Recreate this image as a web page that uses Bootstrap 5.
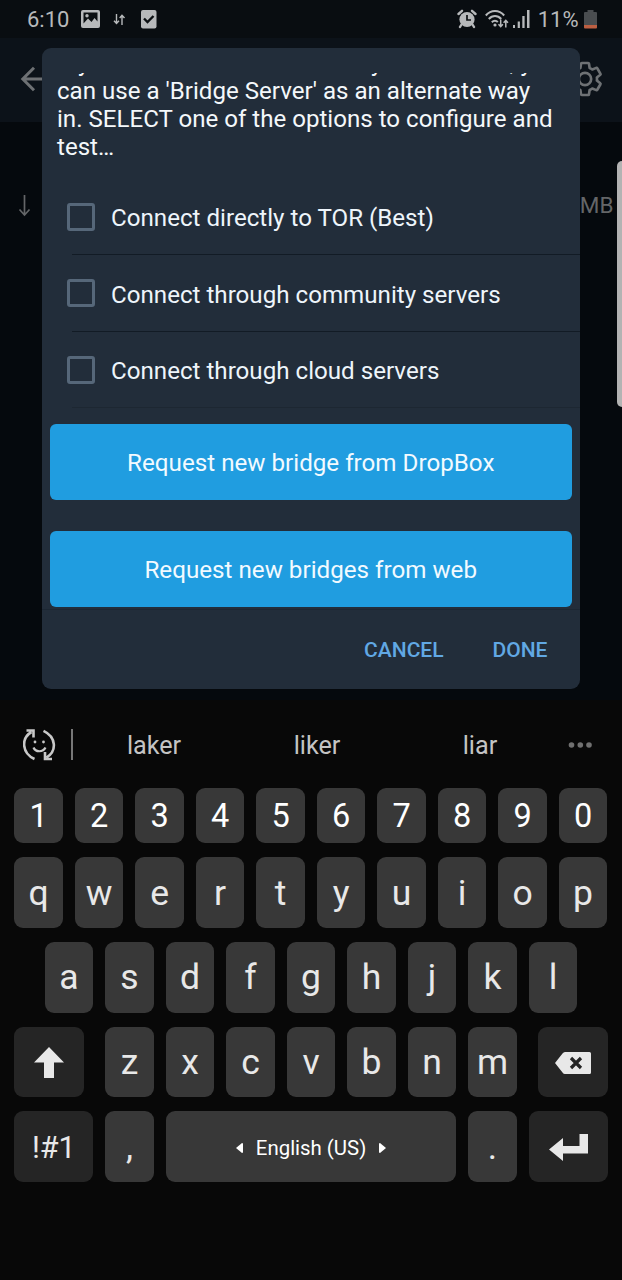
<!DOCTYPE html>
<html lang="en">
<head>
<meta charset="utf-8">
<meta name="viewport" content="width=device-width, initial-scale=1">
<title>Bridge settings</title>
<link href="https://cdn.jsdelivr.net/npm/bootstrap@5.3.0/dist/css/bootstrap.min.css" rel="stylesheet">
<style>
body{font-family:Roboto,"Liberation Sans",sans-serif;background:#080808;color:#fff;width:622px;height:1280px;overflow:hidden}
svg{display:block;flex:none}
.screen{height:700px;background:#05090d}
.status{height:38px;background:#090d11;color:#b7b9bb;font-size:22px;line-height:38px;padding:0 25.5px 0 27px}
.status span{padding-top:1px}
.appbar{height:84px;background:#0c1219;padding:0 17px 3px 20px;color:#6e7174}
.stats{height:168px;color:#646668;font-size:22.5px;padding:0 8.5px 0 18px}
.side-panel{right:0;top:161px;width:5.5px;height:246px;background:#b3b3b3;border-radius:6px 0 0 6px}
.dialog{left:41.5px;top:48px;width:538.5px;height:641px;background:#222d3a;border-radius:9px;padding-top:25px}
.message{height:98px;overflow:hidden;padding-left:15.5px;font-size:24.1px;line-height:28.3px;color:#f4f8fb}
.message div{margin-top:-24.5px;white-space:nowrap}
.option{height:76.7px;padding-left:25px;gap:16.5px;font-size:24.15px;color:#eef5fb;position:relative}
.option span:last-child{padding-top:3px}
.option::after{content:"";position:absolute;left:30px;right:0;bottom:0;height:1px;background:#121b25}
.option:last-child::after{background:#1d2732}
.box{width:28px;height:28px;border:3px solid #566779;border-radius:3px}
.bridge{height:76px;margin:0 8px;border:0;border-radius:6px;background:#209de0;color:#f2faff;font-size:24.2px;padding:2px 0 0}
.actions{border-top:1px solid #1c2733;height:80px;padding:3px 32.5px 0 0;gap:49px;font-size:21px;font-weight:500;color:#61a8e4}
.suggest{height:87.5px;padding-top:2px;color:#c4c4c4;font-size:25.2px}
.suggest .word{width:163px;text-align:center;padding-top:3px}
.keys{padding:0 14.3px;gap:14px}
.krow{gap:12px;height:70.8px}
.krow.nums{height:55.5px}
.key{width:48.5px;flex:none;background:#383838;border-radius:9px;font-size:35.5px;line-height:1;color:#e8e8e8;display:flex;align-items:center;justify-content:center;padding-top:2px}
.nums .key{font-size:32.5px;color:#fff}
.key.fn{background:#252525}
.key.sym{font-size:30.5px}
.key.space{width:290.5px;font-size:20.4px;color:#fff;gap:12.5px}
.key.wide{width:69.7px}
.key.wider{width:79px}
</style>
</head>
<body>
<main class="screen position-relative">
  <header class="status d-flex align-items-center">
    <span>6:10</span>
    <svg style="margin-left:11.500px" width="19" height="18" viewBox="0 0 19 18"><rect width="19" height="18" rx="2" fill="#b7b9bb"/><path d="M2.500 2.500h14v9l-3-3.500-3 4-3.500-3.500-4.500 5z" fill="#0c1013"/><circle cx="6" cy="5.800" r="1.700" fill="#b7b9bb"/></svg>
    <svg style="margin-left:13px" width="13" height="11" viewBox="0 0 13 11" fill="none" stroke="#b7b9bb" stroke-width="1.400"><path d="M3.500 0v9M1 6.800 3.500 9.500 6 6.800M9 11V1.500M6.700 4 9 1.300 11.500 4"/></svg>
    <svg style="margin-left:15px" width="16" height="19" viewBox="0 0 16 19"><rect width="15.500" height="18.500" rx="2" fill="#b7b9bb"/><path d="M3 8.500 6.500 12 12.500 6" fill="none" stroke="#0c1013" stroke-width="2.400"/></svg>
    <svg class="ms-auto" width="20" height="20" viewBox="0 0 20 20"><circle cx="10" cy="10.500" r="7.600" fill="#b7b9bb"/><path d="M1.500 5 5 1.800M18.500 5 15 1.800M4.500 15.500 3 18M15.500 15.500 17 18" stroke="#b7b9bb" stroke-width="2.400" stroke-linecap="round"/><path d="M10 6v5h4" fill="none" stroke="#0c1013" stroke-width="1.700"/></svg>
    <svg style="margin-left:8px" width="24" height="19" viewBox="0 0 24 19" fill="none" stroke="#b7b9bb" stroke-width="2"><path d="M.8 5.500C6-.5 14-.5 19.200 5.500M3.800 9c3.600-4 8.800-4 12.400 0M6.800 12.200c2-2 4.400-2 6 0"/><circle cx="10" cy="15" r="1.600" fill="#b7b9bb" stroke="none"/><path d="M15.700 9.500v7M13.500 14.300l2.200 2.300 2.200-2.300M20.800 17.500v-7M18.600 12.700l2.200-2.300 2.200 2.300" stroke-width="1.500"/></svg>
    <svg style="margin-left:4px" width="17" height="18" viewBox="0 0 17 18" fill="#b7b9bb"><path d="M0 15h2v3H0zM4.700 11.500h2.200V18H4.700zM9.300 6h2.300v12H9.300zM14 0h2.500v18H14z"/></svg>
    <span style="margin-left:7.500px">11%</span>
    <svg style="margin-left:5px" width="13" height="19" viewBox="0 0 13 19"><path d="M3.500 0h6v2H12q1 0 1 1v14H0V3q0-1 1-1h2.500z" fill="#4a4d50"/><path d="M0 15h13v2.500q0 1-1 1H1q-1 0-1-1z" fill="#bd5f42"/></svg>
  </header>
  <nav class="appbar d-flex align-items-center justify-content-between">
    <svg width="28" height="26" viewBox="0 0 28 26" fill="none" stroke="currentColor" stroke-width="3"><path d="M28 13H3M14 1.800 2.800 13 14 24.200"/></svg>
    <svg width="40" height="40" viewBox="0 0 24 24" fill="none" stroke="currentColor" stroke-width="1.600" stroke-linejoin="round"><path d="M19.140 12.940c.04-.3.06-.61.06-.94 0-.32-.02-.64-.07-.94l2.030-1.580c.18-.14.23-.41.12-.61l-1.920-3.320c-.12-.22-.37-.29-.59-.22l-2.390.96c-.5-.38-1.030-.7-1.620-.94l-.36-2.540c-.04-.24-.24-.41-.48-.41h-3.840c-.24 0-.43.17-.47.41l-.36 2.540c-.59.24-1.130.57-1.620.94l-2.390-.96c-.22-.08-.47 0-.59.22L2.740 8.870c-.12.21-.08.47.12.61l2.030 1.580c-.05.3-.09.63-.09.94s.02.64.07.94l-2.030 1.580c-.18.14-.23.41-.12.61l1.920 3.320c.12.22.37.29.59.22l2.390-.96c.5.38 1.030.7 1.620.94l.36 2.540c.05.24.24.41.48.41h3.840c.24 0 .44-.17.47-.41l.36-2.540c.59-.24 1.130-.56 1.620-.94l2.390.96c.22.08.47 0 .59-.22l1.920-3.320c.12-.22.07-.47-.12-.61z"/><circle cx="12" cy="12" r="3.700"/></svg>
  </nav>
  <section class="stats d-flex align-items-center justify-content-between">
    <svg width="13" height="22" viewBox="0 0 13 22" fill="none" stroke="currentColor" stroke-width="1.700"><path d="M6.500 0v20M1.500 14.500l5 5.500 5-5.500"/></svg>
    <span>MB</span>
  </section>
  <div class="side-panel position-absolute"></div>

  <section class="dialog position-absolute d-flex flex-column" role="dialog">
    <div class="message"><div>If your mobile network actively blocks TOR, you<br>can use a 'Bridge Server' as an alternate way<br>in. SELECT one of the options to configure and<br>test…</div></div>
    <div class="options" style="margin-top:7.500px">
      <label class="option d-flex align-items-center"><span class="box"></span><span>Connect directly to TOR (Best)</span></label>
      <label class="option d-flex align-items-center"><span class="box"></span><span>Connect through community servers</span></label>
      <label class="option d-flex align-items-center"><span class="box"></span><span>Connect through cloud servers</span></label>
    </div>
    <button class="bridge btn" style="margin-top:15.700px">Request new bridge from DropBox</button>
    <button class="bridge btn" style="margin-top:31px">Request new bridges from web</button>
    <div class="actions d-flex align-items-center justify-content-end" style="margin-top:2.500px"><span>CANCEL</span><span>DONE</span></div>
  </section>
</main>

<section class="keyboard">
  <div class="suggest d-flex align-items-center">
    <svg style="margin-left:23px" width="33" height="32" viewBox="0 0 33 32" fill="none" stroke="#c8c8c8" stroke-width="2.600"><path d="M11.500 30C-1.500 24-2 9 8.500 3M3.500 1.500h7v7M20.500 1.800C33.500 8 34 22 23.500 28.500M29 30h-7v-7"/><path d="M10.500 18.500c2 5 9.500 5 12 0" stroke-width="2.200"/><circle cx="12" cy="13" r="1.400" fill="#c8c8c8" stroke="none"/><circle cx="20.500" cy="13" r="1.400" fill="#c8c8c8" stroke="none"/></svg>
    <div style="width:1.500px;height:31px;background:#777;margin-left:15px"></div>
    <span class="word">laker</span><span class="word">liker</span><span class="word">liar</span>
    <svg style="margin-left:6px" width="25" height="6" viewBox="0 0 25 6" fill="#707070"><circle cx="3.500" cy="3" r="2.800"/><circle cx="12.300" cy="3" r="2.800"/><circle cx="21" cy="3" r="2.800"/></svg>
  </div>
  <div class="keys d-flex flex-column">
    <div class="krow nums d-flex"><div class="key">1</div><div class="key">2</div><div class="key">3</div><div class="key">4</div><div class="key">5</div><div class="key">6</div><div class="key">7</div><div class="key">8</div><div class="key">9</div><div class="key">0</div></div>
    <div class="krow d-flex"><div class="key">q</div><div class="key">w</div><div class="key">e</div><div class="key">r</div><div class="key">t</div><div class="key">y</div><div class="key">u</div><div class="key">i</div><div class="key">o</div><div class="key">p</div></div>
    <div class="krow d-flex justify-content-center"><div class="key">a</div><div class="key">s</div><div class="key">d</div><div class="key">f</div><div class="key">g</div><div class="key">h</div><div class="key">j</div><div class="key">k</div><div class="key">l</div></div>
    <div class="krow d-flex">
      <div class="key fn wide me-auto"><svg width="30" height="31" viewBox="0 0 30 31" fill="#e8e8e8"><path d="M15 0 30 15.500H20V31H10V15.500H0z"/></svg></div>
      <div class="key">z</div><div class="key">x</div><div class="key">c</div><div class="key">v</div><div class="key">b</div><div class="key">n</div><div class="key">m</div>
      <div class="key fn wide ms-auto"><svg width="36" height="22" viewBox="0 0 36 22"><path d="M10 0h24.500q1.500 0 1.500 1.500v19q0 1.500-1.500 1.500H10Q8.500 22 7.500 20.500L0 11 7.500 1.500Q8.500 0 10 0z" fill="#e8e8e8"/><path d="m16 6 10 10M26 6 16 16" stroke="#252525" stroke-width="3.200"/></svg></div>
    </div>
    <div class="krow d-flex">
      <div class="key fn wider sym">!#1</div>
      <div class="key">,</div>
      <div class="key space"><svg width="7" height="10" viewBox="0 0 7 10" fill="#fff"><path d="M0 5 6 0q1 0 1 1v8q0 1-1 1z"/></svg><span>English (US)</span><svg width="7" height="10" viewBox="0 0 7 10" fill="#fff"><path d="M7 5 1 0Q0 0 0 1v8q0 1 1 1z"/></svg></div>
      <div class="key">.</div>
      <div class="key fn wider"><svg width="39" height="27" viewBox="0 0 39 27" fill="#e8e8e8"><path d="M0 15.500 14 4v8h16.500V0H39v19.500H14V27z"/></svg></div>
    </div>
  </div>
</section>
<script src="https://cdn.jsdelivr.net/npm/bootstrap@5.3.0/dist/js/bootstrap.bundle.min.js"></script>
</body>
</html>
